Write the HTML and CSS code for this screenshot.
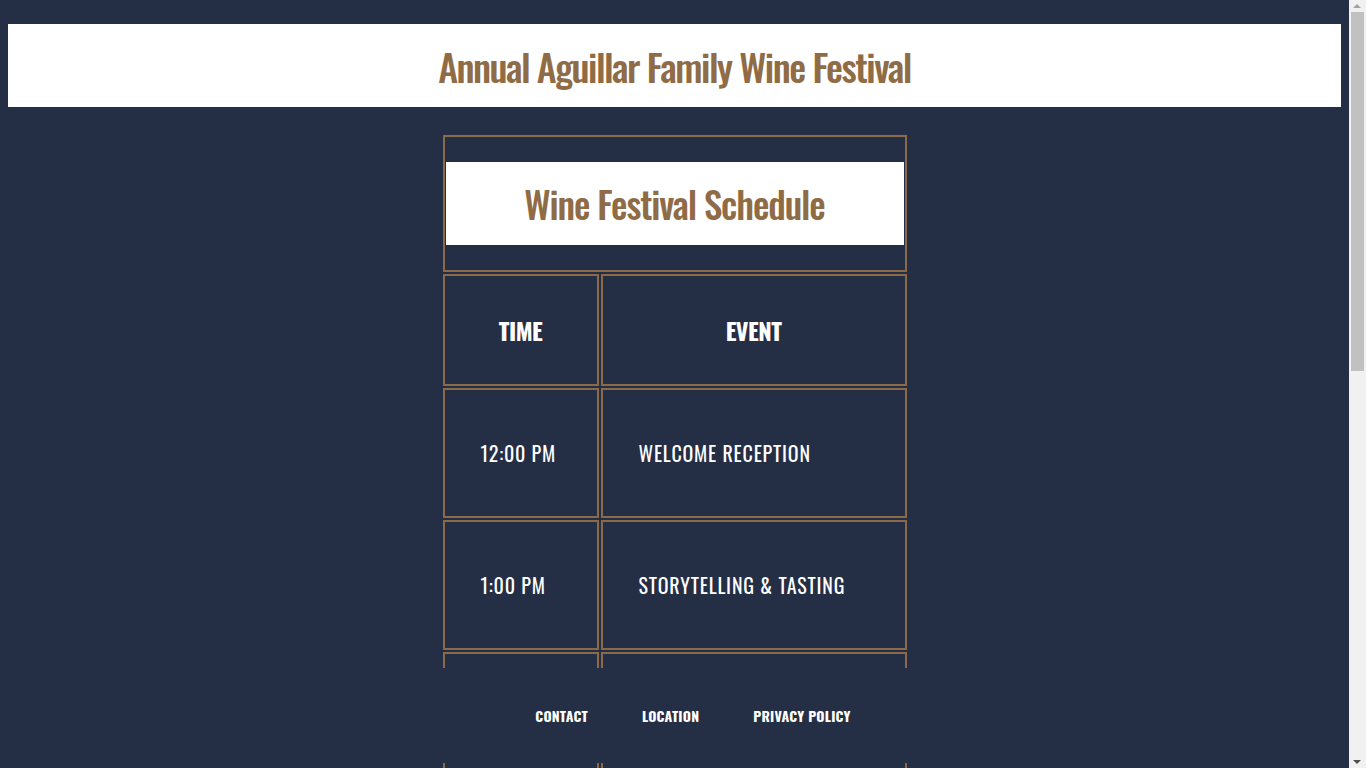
FILE: index.html
```html
<!DOCTYPE html>
<html lang="en">
<head>
<meta charset="utf-8">
<title>Annual Aguillar Family Wine Festival</title>
<link rel="stylesheet" href="styles.css">
</head>
<body>
<header class="site-header">
  <h1 class="site-title">Annual Aguillar Family Wine Festival</h1>
</header>
<main class="schedule">
  <table class="schedule-table">
    <colgroup>
      <col class="col-time-width">
      <col class="col-event-width">
    </colgroup>
    <thead>
      <tr><th colspan="2" class="caption-cell"><h2 class="schedule-title">Wine Festival Schedule</h2></th></tr>
      <tr><th class="col-head">Time</th><th class="col-head">Event</th></tr>
    </thead>
    <tbody>
      <tr><td class="cell">12:00 PM</td><td class="cell">Welcome Reception</td></tr>
      <tr><td class="cell">1:00 PM</td><td class="cell">Storytelling &amp; Tasting</td></tr>
      <tr><td class="cell">2:00 PM</td><td class="cell">Vineyard Tour</td></tr>
      <tr><td class="cell">3:00 PM</td><td class="cell">Food &amp; Wine Pairing</td></tr>
      <tr><td class="cell">4:00 PM</td><td class="cell">Live Music</td></tr>
      <tr><td class="cell">5:00 PM</td><td class="cell">Awards Ceremony</td></tr>
      <tr><td class="cell">6:00 PM</td><td class="cell">Family Dinner</td></tr>
      <tr><td class="cell">8:00 PM</td><td class="cell">Closing Toast</td></tr>
    </tbody>
  </table>
</main>
<footer class="site-footer">
  <ul class="footer-links">
    <li><a href="#" class="footer-link">Contact</a></li>
    <li><a href="#" class="footer-link">Location</a></li>
    <li><a href="#" class="footer-link">Privacy Policy</a></li>
  </ul>
</footer>
<div class="fake-scrollbar" aria-hidden="true">
  <span class="scroll-arrow scroll-arrow-up"></span>
  <span class="scroll-thumb"></span>
  <span class="scroll-arrow scroll-arrow-down"></span>
</div>
</body>
</html>
```
FILE: styles.css
```css
body {
  margin: 8px 25px 8px 8px;
  background: #242e44;
  font-family: "Oswald", "Liberation Sans Narrow", "DejaVu Sans Condensed", sans-serif;
  color: #ffffff;
}

.site-header {
  margin-top: 16px;
  height: 83px;
  background: #ffffff;
  display: flex;
  align-items: center;
  justify-content: center;
}

.site-title {
  margin: 0;
  color: #8f6c46;
  font-size: 38px;
  font-weight: 500;
  letter-spacing: -1.5px;
}

.schedule {
  padding-bottom: 110px;
}

.schedule-table {
  margin: 26px auto 0;
  width: 468px;
  border-spacing: 2px;
  table-layout: fixed;
}

.col-time-width {
  width: 156px;
}

.schedule-table th,
.schedule-table td {
  box-sizing: border-box;
  border: 2px solid #8a6a48;
}

.caption-cell {
  padding: 1px;
}

.schedule-title {
  margin: 24px 0;
  height: 83px;
  background: #ffffff;
  color: #8f6c46;
  font-size: 37px;
  font-weight: 500;
  letter-spacing: -1.1px;
  display: flex;
  align-items: center;
  justify-content: center;
}

.col-head {
  height: 112px;
  padding: 0;
  font-size: 24px;
  font-weight: 700;
  letter-spacing: -0.5px;
  text-transform: uppercase;
  text-align: center;
  vertical-align: middle;
}

.cell {
  height: 130px;
  padding: 0 0 0 36px;
  font-size: 20px;
  letter-spacing: 0.8px;
  text-transform: uppercase;
  vertical-align: middle;
}

.site-footer {
  position: fixed;
  left: 0;
  right: 17px;
  bottom: 5px;
  height: 95px;
  padding-bottom: 2px;
  box-sizing: border-box;
  background: #242e44;
  display: flex;
  align-items: center;
  justify-content: center;
}

.footer-links {
  list-style: none;
  margin: 0;
  padding: 0 0 0 37px;
  display: flex;
  gap: 54px;
}

.footer-link {
  color: #ffffff;
  text-decoration: none;
  text-transform: uppercase;
  font-size: 14px;
  font-weight: 700;
  letter-spacing: 0.2px;
}

.fake-scrollbar {
  position: fixed;
  top: 0;
  right: 0;
  bottom: 0;
  width: 17px;
  background: #f1f1f1;
}

.scroll-thumb {
  position: absolute;
  top: 12px;
  left: 2px;
  width: 13px;
  height: 359px;
  background: #c1c1c1;
}

.scroll-arrow {
  position: absolute;
  left: 4px;
  width: 0;
  height: 0;
  border-left: 4px solid transparent;
  border-right: 4px solid transparent;
}

.scroll-arrow-up {
  top: 4px;
  border-bottom: 4px solid #a3a3a3;
}

.scroll-arrow-down {
  bottom: 4px;
  border-top: 4px solid #505050;
}
```
